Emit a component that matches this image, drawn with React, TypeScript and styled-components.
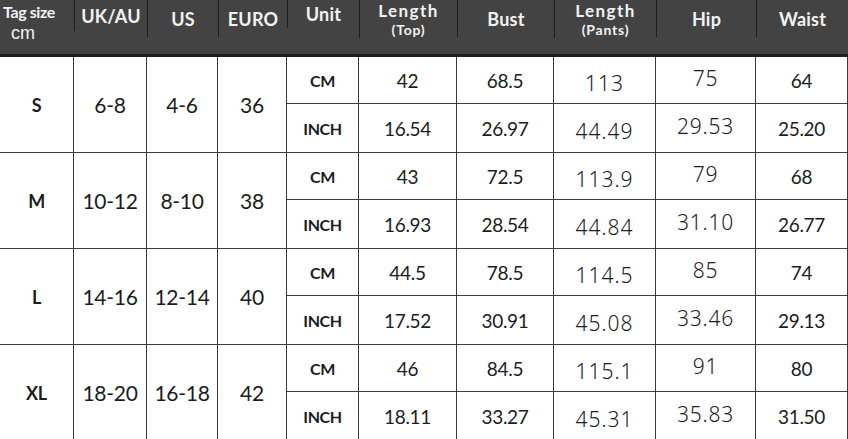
import React from 'react'
import styled, { createGlobalStyle } from 'styled-components'

const GlobalStyle = createGlobalStyle`
  html, body {
    margin: 0;
    padding: 0;
    background: #ffffff;
  }
  body {
    font-family: Lato, "Noto Sans", sans-serif;
  }
`

const COLUMNS = '74px 73px 71px 69px 72px 98px 97px 102px 100px 1fr'

const Chart = styled.div`
  width: 848px;
  height: 439px;
  overflow: hidden;
  background: #fff;
`

const Header = styled.div`
  display: grid;
  grid-template-columns: ${COLUMNS};
  height: 54px;
  background: #434343;
  border-bottom: 3px solid #1e1e1e;
  color: #f2f2f2;
`

const HeaderCell = styled.div`
  display: flex;
  flex-direction: column;
`

const HeaderLabel = styled.div<{ $divider?: boolean; $height?: number }>`
  height: ${p => p.$height ?? 37}px;
  display: flex;
  flex-direction: column;
  align-items: center;
  justify-content: center;
  border-left: ${p => (p.$divider ? '1.5px solid #1e1e1e' : 'none')};
  font-weight: 700;
  font-size: 18px;
  letter-spacing: 0.2px;
  line-height: 18px;
`

const TagSize = styled.div`
  padding: 3px 0 0 3px;
  font-weight: 700;
  font-size: 16px;
  letter-spacing: -0.4px;
  line-height: 18px;
`

const Cm = styled.div`
  margin-top: 5px;
  padding-left: 11px;
  font-family: "Liberation Sans", Arial, sans-serif;
  font-size: 18px;
  line-height: 15px;
`

const MainLabel = styled.div`
  font-size: 17px;
  line-height: 21px;
  letter-spacing: 1.4px;
`

const SubLabel = styled.div`
  font-size: 14px;
  line-height: 17px;
  letter-spacing: 0.8px;
`

const Body = styled.div`
  display: grid;
  grid-template-columns: ${COLUMNS};
  grid-auto-rows: 47px 49px;
`

const Cell = styled.div<{ $span?: boolean; $size?: number; $weight?: number; $font?: string; $shift?: number; $spacing?: number }>`
  grid-row: ${p => (p.$span ? 'span 2' : 'auto')};
  display: flex;
  align-items: center;
  justify-content: center;
  border-right: 1px solid #3a3a3a;
  border-bottom: 1px solid #3a3a3a;
  box-sizing: border-box;
  color: #1c1c1c;
  font-family: ${p => p.$font ?? 'Lato, "Noto Sans", sans-serif'};
  font-size: ${p => p.$size ?? 19}px;
  font-weight: ${p => p.$weight ?? 400};
  letter-spacing: ${p => p.$spacing ?? -0.3}px;
  white-space: nowrap;

  & > span {
    transform: translateY(${p => p.$shift ?? 0}px);
  }
`

type Group = {
  tag: string
  uk: string
  us: string
  euro: string
  cm: string[]
  inch: string[]
}

const groups: Group[] = [
  { tag: 'S', uk: '6-8', us: '4-6', euro: '36', cm: ['42', '68.5', '113', '75', '64'], inch: ['16.54', '26.97', '44.49', '29.53', '25.20'] },
  { tag: 'M', uk: '10-12', us: '8-10', euro: '38', cm: ['43', '72.5', '113.9', '79', '68'], inch: ['16.93', '28.54', '44.84', '31.10', '26.77'] },
  { tag: 'L', uk: '14-16', us: '12-14', euro: '40', cm: ['44.5', '78.5', '114.5', '85', '74'], inch: ['17.52', '30.91', '45.08', '33.46', '29.13'] },
  { tag: 'XL', uk: '18-20', us: '16-18', euro: '42', cm: ['46', '84.5', '115.1', '91', '80'], inch: ['18.11', '33.27', '45.31', '35.83', '31.50'] },
]

const LIGHT = '"Noto Sans", "Open Sans", sans-serif'

// per measurement column: font tweaks so the mixed typefaces of the original line up
const valueStyle = [
  { $size: 19 },
  { $size: 19 },
  { $size: 21, $font: LIGHT, $weight: 300, $shift: 3, $spacing: 1 },
  { $size: 21, $font: LIGHT, $weight: 300, $shift: -2, $spacing: 0.8 },
  { $size: 19 },
]

function ValueRow({ unit, values }: { unit: string; values: string[] }) {
  return (
    <>
      <Cell $size={16} $weight={700} $spacing={-0.4}>
        <span>{unit}</span>
      </Cell>
      {values.map((v, i) => (
        <Cell key={i} {...valueStyle[i]}>
          <span>{v}</span>
        </Cell>
      ))}
    </>
  )
}

export default function App() {
  return (
    <Chart>
      <GlobalStyle />
      <Header>
        <HeaderCell>
          <TagSize>Tag size</TagSize>
          <Cm>cm</Cm>
        </HeaderCell>
        <HeaderCell><HeaderLabel $divider $height={31}>UK/AU</HeaderLabel></HeaderCell>
        <HeaderCell><HeaderLabel $divider>US</HeaderLabel></HeaderCell>
        <HeaderCell><HeaderLabel $divider>EURO</HeaderLabel></HeaderCell>
        <HeaderCell><HeaderLabel $divider $height={28}>Unit</HeaderLabel></HeaderCell>
        <HeaderCell>
          <HeaderLabel $divider $height={38}>
            <MainLabel>Length</MainLabel>
            <SubLabel>(Top)</SubLabel>
          </HeaderLabel>
        </HeaderCell>
        <HeaderCell><HeaderLabel $divider>Bust</HeaderLabel></HeaderCell>
        <HeaderCell>
          <HeaderLabel $divider $height={38}>
            <MainLabel>Length</MainLabel>
            <SubLabel>(Pants)</SubLabel>
          </HeaderLabel>
        </HeaderCell>
        <HeaderCell><HeaderLabel $divider>Hip</HeaderLabel></HeaderCell>
        <HeaderCell><HeaderLabel $divider>Waist</HeaderLabel></HeaderCell>
      </Header>
      <Body>
        {groups.map(g => (
          <React.Fragment key={g.tag}>
            <Cell $span $size={18} $weight={700}><span>{g.tag}</span></Cell>
            <Cell $span $size={21}><span>{g.uk}</span></Cell>
            <Cell $span $size={21}><span>{g.us}</span></Cell>
            <Cell $span $size={21}><span>{g.euro}</span></Cell>
            <ValueRow unit="CM" values={g.cm} />
            <ValueRow unit="INCH" values={g.inch} />
          </React.Fragment>
        ))}
      </Body>
    </Chart>
  )
}
